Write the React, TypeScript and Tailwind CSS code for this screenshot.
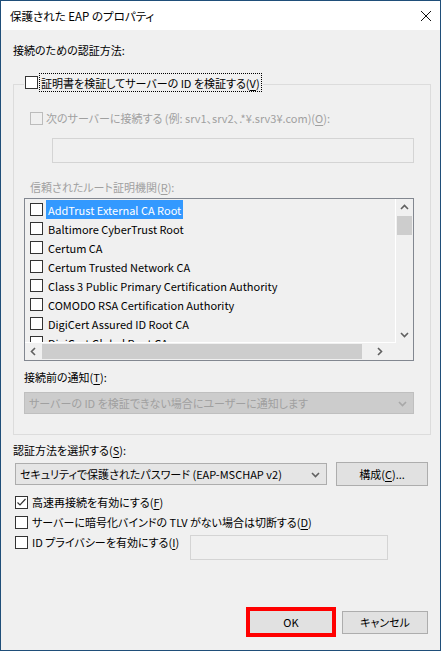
import type { ReactNode } from "react";

const certs = [
  "AddTrust External CA Root",
  "Baltimore CyberTrust Root",
  "Certum CA",
  "Certum Trusted Network CA",
  "Class 3 Public Primary Certification Authority",
  "COMODO RSA Certification Authority",
  "DigiCert Assured ID Root CA",
  "DigiCert Global Root CA",
];

function Box({ checked, disabled }: { checked?: boolean; disabled?: boolean }) {
  return (
    <span
      className={`w-[13px] h-[13px] shrink-0 border flex items-center justify-center ${
        disabled ? "border-[#bcbcbc] bg-[#f0f0f0]" : "border-[#333333] bg-white"
      }`}
    >
      {checked && (
        <svg width="11" height="11" viewBox="0 0 11 11" fill="none" stroke="#333" strokeWidth="1.2">
          <path d="M1.5 5.5l2.5 2.5 5.5-6" />
        </svg>
      )}
    </span>
  );
}

function Chevron({ dir, color = "#606060" }: { dir: "up" | "down" | "left" | "right"; color?: string }) {
  const d = {
    up: "M1 6l3.5-3.5L8 6",
    down: "M1 3l3.5 3.5L8 3",
    left: "M6 1L2.5 4.5 6 8",
    right: "M3 1l3.5 3.5L3 8",
  }[dir];
  return (
    <svg width="9" height="9" viewBox="0 0 9 9" fill="none" stroke={color} strokeWidth="1.6">
      <path d={d} />
    </svg>
  );
}

function Key({ children }: { children: ReactNode }) {
  return <span className="underline underline-offset-2">{children}</span>;
}

export default function App() {
  return (
    <div className="w-[441px] h-[651px] flex flex-col border border-[#1f4e79] bg-[#f0f0f0] text-[11px] leading-[16px] text-black whitespace-nowrap font-['Noto_Sans_CJK_JP',sans-serif] [font-feature-settings:'palt']">
      {/* Title bar */}
      <div className="h-[29px] shrink-0 bg-white flex items-center justify-between pl-[9px] pr-[9px]">
        <span className="text-[11.5px]">保護された EAP のプロパティ</span>
        <svg width="10" height="10" viewBox="0 0 10 10" stroke="#111" strokeWidth="1">
          <path d="M0 0l10 10M10 0L0 10" />
        </svg>
      </div>

      {/* Body */}
      <div className="flex-1 flex flex-col px-[12px]">
        <div className="mt-[12px]">接続のための認証方法:</div>

        {/* Group box */}
        <div className="mt-[26px] border border-[#dcdcdc] flex flex-col pb-[20px] w-[418px]">
          <div className="-mt-[12px] ml-[10px] w-fit bg-[#f0f0f0] px-[1px] h-[19px] flex items-center gap-[1px]">
            <Box />
            <span className="border border-dotted border-black px-[1px] h-[19px] flex items-center">
              証明書を検証してサーバーの ID を検証する(<Key>V</Key>)
            </span>
          </div>

          <div className="mt-[18px] ml-[16px] h-[16px] flex items-center gap-[3px] text-[#a0a0a0]">
            <Box disabled />
            <span>
              次のサーバーに接続する (例: srv1、srv2、.*¥.srv3¥.com)(<Key>O</Key>):
            </span>
          </div>

          <div className="mt-[12px] ml-[38px] w-[362px] h-[25px] border border-[#d4d4d4] bg-[#f0f0f0]" />

          <div className="mt-[16px] ml-[16px] text-[#a0a0a0]">
            信頼されたルート証明機関(<Key>R</Key>):
          </div>

          {/* Certificate list */}
          <div className="mt-[3px] ml-[10px] w-[390px] h-[163px] border border-[#828790] grid grid-cols-[1fr_17px] grid-rows-[1fr_17px]">
            <div className="overflow-hidden border-r border-b border-white pt-[1px]">
              {certs.map((c, i) => (
                <div key={c} className="h-[19px] flex items-center pl-[5px] gap-[3px]">
                  <Box />
                  <span className={`px-[2px] h-[19px] flex items-center ${i === 0 ? "bg-[#3399ff] text-white" : ""}`}>
                    {c}
                  </span>
                </div>
              ))}
            </div>
            <div className="flex flex-col items-center">
              <div className="h-[17px] flex items-center justify-center">
                <Chevron dir="up" />
              </div>
              <div className="w-[15px] h-[19px] bg-[#cdcdcd]" />
              <div className="flex-1" />
              <div className="h-[17px] flex items-center justify-center">
                <Chevron dir="down" />
              </div>
            </div>
            <div className="flex items-center">
              <div className="w-[17px] flex justify-center">
                <Chevron dir="left" />
              </div>
              <div className="w-[320px] h-[15px] bg-[#cdcdcd]" />
              <div className="flex-1 flex justify-center">
                <Chevron dir="right" />
              </div>
            </div>
            <div />
          </div>

          <div className="mt-[8px] ml-[10px]">
            接続前の通知(<Key>T</Key>):
          </div>

          <div className="mt-[7px] ml-[10px] w-[390px] h-[22px] border border-[#bfbfbf] bg-[#cccccc] flex items-center justify-between pl-[4px] pr-[6px] text-[#a0a0a0]">
            <span>サーバーの ID を検証できない場合にユーザーに通知します</span>
            <Chevron dir="down" color="#a8a8a8" />
          </div>
        </div>

        <div className="mt-[7px]">
          認証方法を選択する(<Key>S</Key>):
        </div>

        <div className="mt-[4px] h-[24px] flex items-center">
          <div className="ml-[2px] w-[312px] h-[22px] border border-[#adadad] bg-[#e5e5e5] flex items-center justify-between pl-[4px] pr-[6px]">
            <span>セキュリティで保護されたパスワード (EAP-MSCHAP v2)</span>
            <Chevron dir="down" />
          </div>
          <button className="ml-[9px] w-[92px] h-[24px] border border-[#adadad] bg-[#e1e1e1] flex items-center justify-center">
            構成(<Key>C</Key>)...
          </button>
        </div>

        <div className="mt-[6px] ml-[2px] h-[20px] flex items-center gap-[4px]">
          <Box checked />
          <span>
            高速再接続を有効にする(<Key>F</Key>)
          </span>
        </div>
        <div className="ml-[2px] h-[20px] flex items-center gap-[4px]">
          <Box />
          <span>
            サーバーに暗号化バインドの TLV がない場合は切断する(<Key>D</Key>)
          </span>
        </div>
        <div className="ml-[2px] flex items-start">
          <div className="w-[175px] h-[20px] flex items-center gap-[4px]">
            <Box />
            <span>
              ID プライバシーを有効にする(<Key>I</Key>)
            </span>
          </div>
          <div className="mt-[3px] w-[198px] h-[25px] border border-[#d4d4d4] bg-[#f0f0f0]" />
        </div>

        <div className="flex-1" />

        <div className="pb-[13px] flex items-center justify-end gap-[6px]">
          <button className="w-[90px] h-[30px] border-[4px] border-[#ff0000] bg-[#e1e1e1] flex items-center justify-center">
            OK
          </button>
          <button className="w-[86px] h-[23px] border border-[#adadad] bg-[#e1e1e1] flex items-center justify-center">
            キャンセル
          </button>
        </div>
      </div>
    </div>
  );
}
